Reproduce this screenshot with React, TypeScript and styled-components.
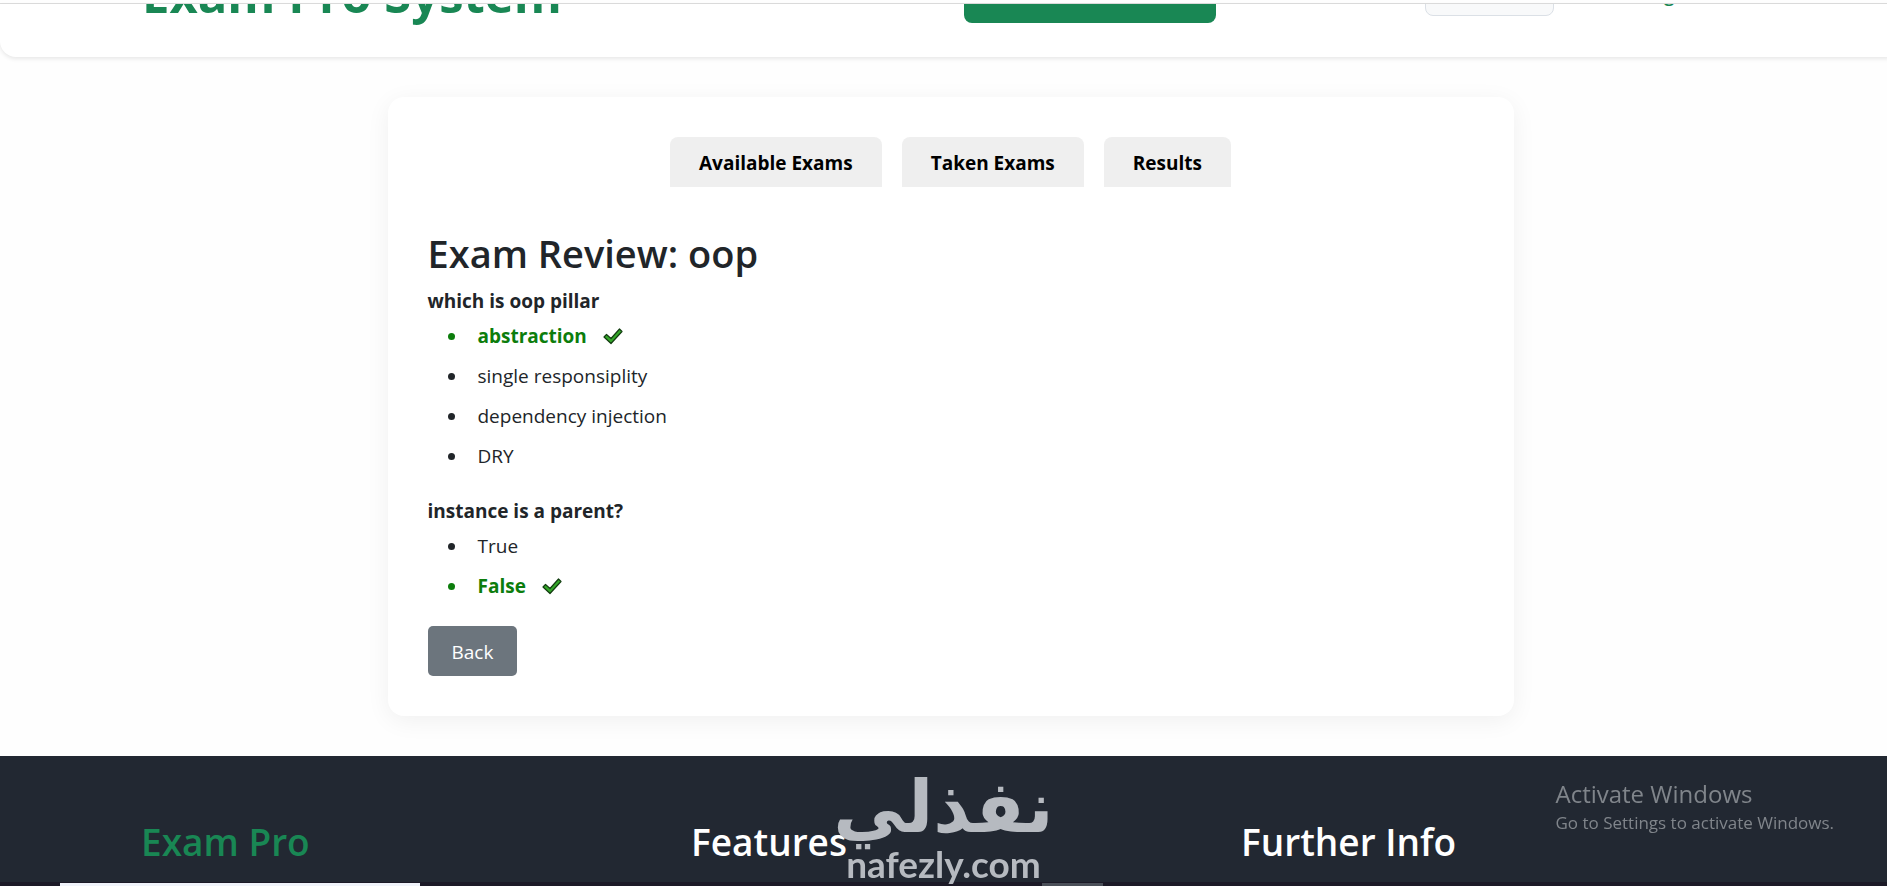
import React from 'react';
import styled, { createGlobalStyle } from 'styled-components';

const Global = createGlobalStyle`
  *, *::before, *::after { box-sizing: border-box; }
  body {
    margin: 0;
    background: #fefefe;
    color: #212529;
    font-family: "Segoe UI", "Open Sans", sans-serif;
    font-size: 19px;
    line-height: 30px;
    overflow: hidden;
  }
  h1, h2, h3, p, ul { margin: 0; padding: 0; }
  button { font: inherit; border: 0; cursor: pointer; }
`;

const Viewport = styled.div`
  min-height: 100vh;
  display: flex;
  flex-direction: column;
  overflow: hidden;
`;

const Page = styled.div`
  width: calc(100% + 14px);
  flex: 1;
  display: flex;
  flex-direction: column;
`;

const Rule = styled.div`
  margin-top: 3px;
  height: 1px;
  background: #dcdcdc;
`;

const HeaderShell = styled.header`
  height: 53px;
  border-radius: 0 0 16px 16px;
  background: #fff;
  box-shadow: 0 2px 4px rgba(0, 0, 0, 0.09);
`;

const HeaderClip = styled.div`
  height: 100%;
  display: flex;
  align-items: flex-end;
  padding: 0 142px;
  overflow: hidden;
`;

const Brand = styled.h1`
  flex: 1;
  color: #198754;
  font-size: 49px;
  line-height: 60px;
  font-weight: 700;
  margin-bottom: 33px;
`;

const StartButton = styled.button`
  width: 252px;
  height: 56px;
  margin: 0 209px 34px 0;
  border-radius: 8px;
  background: #198754;
`;

const UserButton = styled.button`
  width: 129px;
  height: 48px;
  margin: 0 88px 41px 0;
  border: 1px solid #dbe0e6;
  border-radius: 8px;
  background: #f8f9fa;
`;

const LogoutLink = styled.a`
  width: 117px;
  margin-bottom: 48px;
  color: #198754;
  font-weight: 600;
  text-decoration: none;
`;

const Card = styled.main`
  width: 1126px;
  max-width: 100%;
  margin: 40px auto;
  padding: 40px;
  border-radius: 16px;
  background: #fff;
  box-shadow: 0 5px 25px rgba(0, 0, 0, 0.06);
`;

const Tabs = styled.nav`
  display: flex;
  justify-content: center;
  gap: 20px;
  margin-bottom: 40px;
`;

const Tab = styled.button`
  height: 50px;
  padding: 2px 29px 0;
  border-radius: 8px 8px 0 0;
  background: #efefef;
  color: #000;
  font-weight: 700;
`;

const Title = styled.h2`
  font-size: 38px;
  line-height: 48px;
  font-weight: 600;
  padding-top: 2px;
  margin-bottom: 9px;
`;

const Question = styled.section`
  margin-bottom: 20px;
`;

const QuestionText = styled.p`
  font-weight: 700;
`;

const Options = styled.ul`
  padding-left: 40px;
`;

const Option = styled.li<{ $correct?: boolean }>`
  padding: 5px 10px;
  color: ${p => (p.$correct ? '#0c7d0c' : 'inherit')};
  font-weight: ${p => (p.$correct ? 700 : 400)};
`;

const Check = styled.svg`
  width: 20px;
  height: 17px;
  margin-left: 16px;
  vertical-align: -2px;
`;

const BackButton = styled.button`
  display: block;
  height: 50px;
  padding: 2px 24px 0;
  border-radius: 5px;
  background: #6c757d;
  color: #fff;
`;

const Footer = styled.footer`
  flex: 1;
  min-height: 131px;
  display: grid;
  grid-template-columns: repeat(3, 550px);
  padding: 62px 141px 0;
  background: #222832;
`;

const FooterHeading = styled.h3<{ $green?: boolean }>`
  font-size: 37px;
  line-height: 48px;
  font-weight: 600;
  color: ${p => (p.$green ? '#198754' : '#fff')};
`;

const Notice = styled.aside`
  position: fixed;
  right: 53px;
  bottom: 51px;
  color: #80858b;
  font-size: 17px;
  line-height: 24px;
`;

const NoticeTitle = styled.p`
  font-size: 24px;
  line-height: 34px;
`;

const Watermark = styled.div`
  position: fixed;
  left: 0;
  right: 0;
  bottom: 0;
  padding-bottom: 3px;
  display: flex;
  flex-direction: column;
  align-items: center;
  color: #b6bac0;
  pointer-events: none;
`;

const WatermarkName = styled.span`
  font-family: "DejaVu Sans", sans-serif;
  font-size: 72px;
  font-weight: 700;
  line-height: 76px;
`;

const WatermarkSite = styled.span`
  font-family: Lato, sans-serif;
  font-size: 37px;
  font-weight: 700;
  line-height: 38px;
`;

const Taskbar = styled.div`
  position: fixed;
  left: 0;
  right: 0;
  bottom: 0;
  height: 4px;
  padding: 1px 0 0 60px;
  display: flex;
  gap: 622px;
  background: #1c1a27;
`;

const TaskItem = styled.div<{ $active?: boolean }>`
  width: ${p => (p.$active ? 360 : 61)}px;
  background: ${p => (p.$active ? '#f0f3fa' : '#4b5059')};
`;

const questions = [
  {
    text: 'which is oop pillar',
    options: ['abstraction', 'single responsiplity', 'dependency injection', 'DRY'],
    answer: 0,
  },
  { text: 'instance is a parent?', options: ['True', 'False'], answer: 1 },
];

function CheckMark() {
  return (
    <Check viewBox="0 0 20 17" role="img" aria-label="correct">
      <path
        d="M1 9 L3.5 6.5 L8 10.5 L16.5 1 L19 3.5 L8 15.5 Z"
        fill="#35a82a"
        stroke="#123c10"
        strokeWidth="1.2"
        strokeLinejoin="round"
      />
    </Check>
  );
}

export default function App() {
  return (
    <Viewport>
      <Global />
      <Page>
        <Rule />
        <HeaderShell>
          <HeaderClip>
            <Brand>Exam Pro System</Brand>
            <StartButton aria-label="Start" />
            <UserButton aria-label="Account" />
            <LogoutLink href="#logout">Logout</LogoutLink>
          </HeaderClip>
        </HeaderShell>
        <Card>
          <Tabs>
            <Tab>Available Exams</Tab>
            <Tab>Taken Exams</Tab>
            <Tab>Results</Tab>
          </Tabs>
          <Title>Exam Review: oop</Title>
          {questions.map(q => (
            <Question key={q.text}>
              <QuestionText>{q.text}</QuestionText>
              <Options>
                {q.options.map((o, i) => (
                  <Option key={o} $correct={i === q.answer}>
                    {o}
                    {i === q.answer && <CheckMark />}
                  </Option>
                ))}
              </Options>
            </Question>
          ))}
          <BackButton>Back</BackButton>
        </Card>
        <Footer>
          <FooterHeading $green>Exam Pro</FooterHeading>
          <FooterHeading>Features</FooterHeading>
          <FooterHeading>Further Info</FooterHeading>
        </Footer>
      </Page>
      <Notice>
        <NoticeTitle>Activate Windows</NoticeTitle>
        <p>Go to Settings to activate Windows.</p>
      </Notice>
      <Taskbar>
        <TaskItem $active />
        <TaskItem />
      </Taskbar>
      <Watermark>
        <WatermarkName lang="ar" dir="rtl">نفذلي</WatermarkName>
        <WatermarkSite>nafezly.com</WatermarkSite>
      </Watermark>
    </Viewport>
  );
}
